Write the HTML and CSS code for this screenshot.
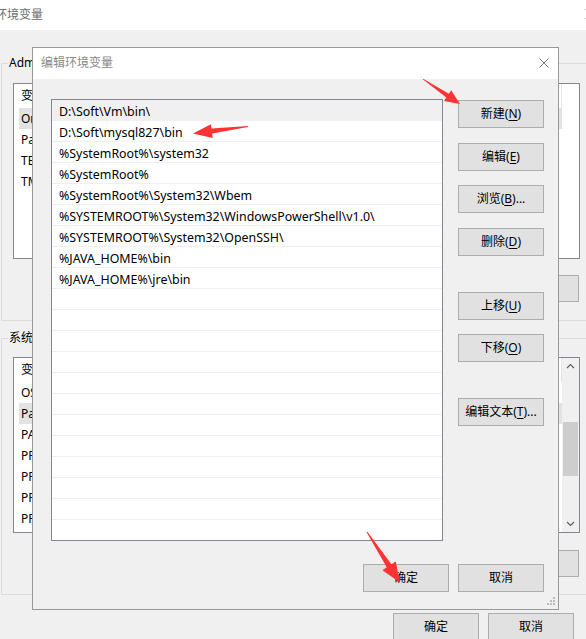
FILE: index.html
```html
<!DOCTYPE html>
<html lang="zh-CN">
<head>
<meta charset="utf-8">
<title>编辑环境变量</title>
<link rel="stylesheet" href="styles.css">
</head>
<body>
<div class="desktop">
  <div class="env-window">
    <div class="bg-titlebar">
      <span class="bg-title">环境变量</span>
      <svg class="bg-close" width="10" height="10" viewBox="0 0 10 10"><path d="M0.5 0.5 L9.5 9.5 M9.5 0.5 L0.5 9.5" stroke="#777" stroke-width="1" fill="none"/></svg>
    </div>
    <div class="env-body">
      <fieldset class="group user-group">
        <legend class="group-title">Administrator 的用户变量(U)</legend>
        <div class="listview">
          <div class="lv-main lv-main-full">
            <div class="lv-header"><span class="col-name">变量</span><span class="col-val">值</span></div>
            <div class="lv-row selected"><span class="col-name">OneDrive</span><span class="col-val">C:\Users\Administrator\OneDrive</span></div>
            <div class="lv-row"><span class="col-name">Path</span><span class="col-val">%USERPROFILE%\AppData\Local\Microsoft\WindowsApps;</span></div>
            <div class="lv-row"><span class="col-name">TEMP</span><span class="col-val">%USERPROFILE%\AppData\Local\Temp</span></div>
            <div class="lv-row"><span class="col-name">TMP</span><span class="col-val">%USERPROFILE%\AppData\Local\Temp</span></div>
          </div>
        </div>
        <div class="group-buttons">
          <button class="btn bg-btn">新建(N)...</button>
          <button class="btn bg-btn">编辑(E)...</button>
          <button class="btn bg-btn">删除(D)</button>
        </div>
      </fieldset>
      <fieldset class="group sys-group">
        <legend class="group-title">系统变量(S)</legend>
        <div class="listview">
          <div class="lv-main">
            <div class="lv-header"><span class="col-name">变量</span><span class="col-val">值</span></div>
            <div class="lv-row"><span class="col-name">OS</span><span class="col-val">Windows_NT</span></div>
            <div class="lv-row selected"><span class="col-name">Path</span><span class="col-val">D:\Soft\Vm\bin\;D:\Soft\mysql827\bin</span></div>
            <div class="lv-row"><span class="col-name">PATHEXT</span><span class="col-val">.COM;.EXE;.BAT;.CMD</span></div>
            <div class="lv-row"><span class="col-name">PROCESSOR_ARCHITECTURE</span><span class="col-val">AMD64</span></div>
            <div class="lv-row"><span class="col-name">PROCESSOR_IDENTIFIER</span><span class="col-val">Intel64 Family 6</span></div>
            <div class="lv-row"><span class="col-name">PROCESSOR_LEVEL</span><span class="col-val">6</span></div>
            <div class="lv-row"><span class="col-name">PROCESSOR_REVISION</span><span class="col-val">9e0a</span></div>
          </div>
          <div class="scrollbar">
            <div class="sb-arrow"><svg width="17" height="17" viewBox="0 0 17 17"><path d="M5 10 L8.5 6.5 L12 10" stroke="#606060" stroke-width="1.2" fill="none"/></svg></div>
            <div class="sb-track"><div class="sb-thumb"></div></div>
            <div class="sb-arrow"><svg width="17" height="17" viewBox="0 0 17 17"><path d="M5 7 L8.5 10.5 L12 7" stroke="#606060" stroke-width="1.2" fill="none"/></svg></div>
          </div>
        </div>
        <div class="group-buttons">
          <button class="btn bg-btn">新建(W)...</button>
          <button class="btn bg-btn">编辑(I)...</button>
          <button class="btn bg-btn">删除(L)</button>
        </div>
      </fieldset>
      <div class="footer-buttons">
        <button class="btn bg-btn">确定</button>
        <button class="btn bg-btn">取消</button>
      </div>
    </div>
  </div>

  <div class="dialog">
    <div class="dlg-titlebar">
      <span class="dlg-title">编辑环境变量</span>
      <svg class="dlg-close" width="10" height="10" viewBox="0 0 10 10"><path d="M0.5 0.5 L9.5 9.5 M9.5 0.5 L0.5 9.5" stroke="#777" stroke-width="1" fill="none"/></svg>
    </div>
    <div class="dlg-body">
      <div class="dlg-main">
        <div class="path-list">
          <div class="path-row selected">D:\Soft\Vm\bin\</div>
          <div class="path-row">D:\Soft\mysql827\bin</div>
          <div class="path-row">%SystemRoot%\system32</div>
          <div class="path-row">%SystemRoot%</div>
          <div class="path-row">%SystemRoot%\System32\Wbem</div>
          <div class="path-row">%SYSTEMROOT%\System32\WindowsPowerShell\v1.0\</div>
          <div class="path-row">%SYSTEMROOT%\System32\OpenSSH\</div>
          <div class="path-row">%JAVA_HOME%\bin</div>
          <div class="path-row">%JAVA_HOME%\jre\bin</div>
          <div class="path-row"></div>
          <div class="path-row"></div>
          <div class="path-row"></div>
          <div class="path-row"></div>
          <div class="path-row"></div>
          <div class="path-row"></div>
          <div class="path-row"></div>
          <div class="path-row"></div>
          <div class="path-row"></div>
          <div class="path-row"></div>
          <div class="path-row"></div>
          <div class="path-row"></div>
        </div>
        <div class="dlg-side">
          <button class="btn">新建(<u>N</u>)</button>
          <button class="btn mt15">编辑(<u>E</u>)</button>
          <button class="btn mt14">浏览(<u>B</u>)...</button>
          <button class="btn mt15">删除(<u>D</u>)</button>
          <button class="btn mt36">上移(<u>U</u>)</button>
          <button class="btn mt14">下移(<u>O</u>)</button>
          <button class="btn mt36">编辑文本(<u>T</u>)...</button>
        </div>
      </div>
      <div class="dlg-footer">
        <button class="btn">确定</button>
        <button class="btn">取消</button>
      </div>
    </div>
    <svg class="grip" width="12" height="12" viewBox="0 0 12 12">
      <rect x="8" y="1" width="2" height="2" fill="#bcbcbc"/>
      <rect x="5" y="4" width="2" height="2" fill="#bcbcbc"/>
      <rect x="8" y="4" width="2" height="2" fill="#bcbcbc"/>
      <rect x="2" y="7" width="2" height="2" fill="#bcbcbc"/>
      <rect x="5" y="7" width="2" height="2" fill="#bcbcbc"/>
      <rect x="8" y="7" width="2" height="2" fill="#bcbcbc"/>
    </svg>
  </div>

  <svg class="annotations" width="586" height="639" viewBox="0 0 586 639">
    <polygon fill="#f33" points="422.78,79.33 446.34,97.42 443.93,100.99 460,104 451.21,90.21 448.80,93.78 423.22,78.67"/>
    <polygon fill="#f33" points="247.94,126.00 211.53,128.62 210.97,124.16 193,133.5 212.73,138.04 212.17,133.58 248.06,127.00"/>
    <polygon fill="#f33" points="366.58,532.27 386.72,567.29 382.36,570.14 400,582.5 395.76,561.38 391.40,564.23 367.42,531.73"/>
  </svg>
</div>
</body>
</html>
```

FILE: styles.css
```css
html, body {
  margin: 0;
  padding: 0;
}

body {
  font-family: "Noto Sans", "Noto Sans CJK SC", sans-serif;
  font-size: 12px;
  color: #000;
  background: #f0f0f0;
  overflow: hidden;
}

.desktop {
  position: relative;
  width: 586px;
  height: 639px;
  overflow: hidden;
}

/* ---------- background window ---------- */
.env-window {
  width: 600px;
  background: #f0f0f0;
}

.bg-titlebar {
  height: 30px;
  background: #fff;
  display: flex;
  align-items: center;
}

.bg-title {
  margin-left: -5px;
  line-height: 16px;
  color: #6e6e6e;
}

.bg-close {
  margin-left: auto;
  margin-right: 5px;
  margin-bottom: 2px;
}

.env-body {
  display: flex;
  flex-direction: column;
}

.group {
  margin: 0 9px 0 1px;
  padding: 0 0 0 6px;
  border: 1px solid #dcdcdc;
  min-width: 0;
}

.user-group {
  margin-top: 25px;
  padding-bottom: 18px;
}

.sys-group {
  margin-top: 9px;
  padding-bottom: 17px;
}

.group-title {
  padding: 0 1px;
  line-height: 16px;
  white-space: nowrap;
}

.listview {
  width: 567px;
  height: 176px;
  box-sizing: border-box;
  margin-left: 5px;
  border: 1px solid #828790;
  background: #fff;
  display: flex;
  overflow: hidden;
}

.user-group .listview {
  margin-top: 12px;
}

.sys-group .listview {
  margin-top: 11px;
}

.lv-main {
  flex: 1;
  min-width: 0;
  padding-left: 5px;
  overflow: hidden;
}

.lv-main-full {
  padding-right: 17px;
}

.lv-header {
  height: 24px;
  display: flex;
  align-items: center;
}

.lv-header .col-name,
.lv-header .col-val {
  border-right: 1px solid #e5e5e5;
  height: 24px;
  line-height: 24px;
}

.lv-row {
  height: 21px;
  line-height: 21px;
  display: flex;
  white-space: nowrap;
}

.lv-row.selected {
  background: #e3e3e3;
}

.col-name {
  width: 180px;
  padding-left: 2px;
  box-sizing: border-box;
  flex: none;
  overflow: hidden;
}

.col-val {
  flex: 1;
  min-width: 0;
  padding-left: 6px;
  overflow: hidden;
}

.scrollbar {
  width: 17px;
  flex: none;
  background: #f0f0f0;
  display: flex;
  flex-direction: column;
}

.sb-arrow {
  height: 17px;
  display: flex;
}

.sb-track {
  flex: 1;
}

.sb-thumb {
  margin-top: 47px;
  margin-left: 1px;
  width: 15px;
  height: 54px;
  background: #cdcdcd;
}

.group-buttons {
  width: 567px;
  margin-left: 5px;
  margin-top: 16px;
  padding-right: 1px;
  box-sizing: border-box;
  display: flex;
  justify-content: flex-end;
  gap: 9px;
}

.sys-group .group-buttons {
  margin-top: 17px;
}

.footer-buttons {
  margin-top: 18px;
  padding-right: 26px;
  display: flex;
  justify-content: flex-end;
  gap: 9px;
}

/* ---------- buttons ---------- */
.btn {
  width: 86px;
  height: 28px;
  box-sizing: border-box;
  margin: 0;
  padding: 0;
  border: 1px solid #adadad;
  background: #e1e1e1;
  font: inherit;
  color: #000;
  line-height: 26px;
  text-align: center;
  white-space: nowrap;
}

.bg-btn {
  height: 27px;
  line-height: 25px;
}

.btn u {
  text-decoration: underline;
  text-underline-offset: 2px;
}

.mt14 { margin-top: 14px; }
.mt15 { margin-top: 15px; }
.mt36 { margin-top: 36px; }

/* ---------- dialog ---------- */
.dialog {
  position: absolute;
  left: 32px;
  top: 47px;
  width: 527px;
  height: 563px;
  box-sizing: border-box;
  border: 1px solid #999;
  background: #f0f0f0;
  display: flex;
  flex-direction: column;
}

.dlg-titlebar {
  height: 31px;
  flex: none;
  background: #fff;
  display: flex;
  align-items: center;
  padding: 0 9px 2px 8px;
  box-sizing: border-box;
}

.dlg-title {
  line-height: 16px;
  color: #8a8a8a;
}

.dlg-close {
  margin-left: auto;
}

.dlg-body {
  padding: 20px 14px 0 18px;
  display: flex;
  flex-direction: column;
}

.dlg-main {
  display: flex;
  gap: 15px;
}

.path-list {
  width: 392px;
  height: 442px;
  box-sizing: border-box;
  border: 1px solid #828790;
  background: #fff;
  overflow: hidden;
}

.path-row {
  height: 21px;
  box-sizing: border-box;
  padding: 4px 0 0 7px;
  font-size: 12.4px;
  line-height: 16px;
  border-bottom: 1px solid #f0f0f0;
  white-space: nowrap;
}

.path-row.selected {
  background: #f0f0f0;
}

.dlg-side {
  width: 86px;
  padding-top: 1px;
  display: flex;
  flex-direction: column;
}

.dlg-footer {
  margin-top: 23px;
  display: flex;
  justify-content: flex-end;
  gap: 9px;
}

.grip {
  position: absolute;
  right: 1px;
  bottom: 1px;
}

/* ---------- annotation arrows ---------- */
.annotations {
  position: absolute;
  left: 0;
  top: 0;
  pointer-events: none;
}
```
